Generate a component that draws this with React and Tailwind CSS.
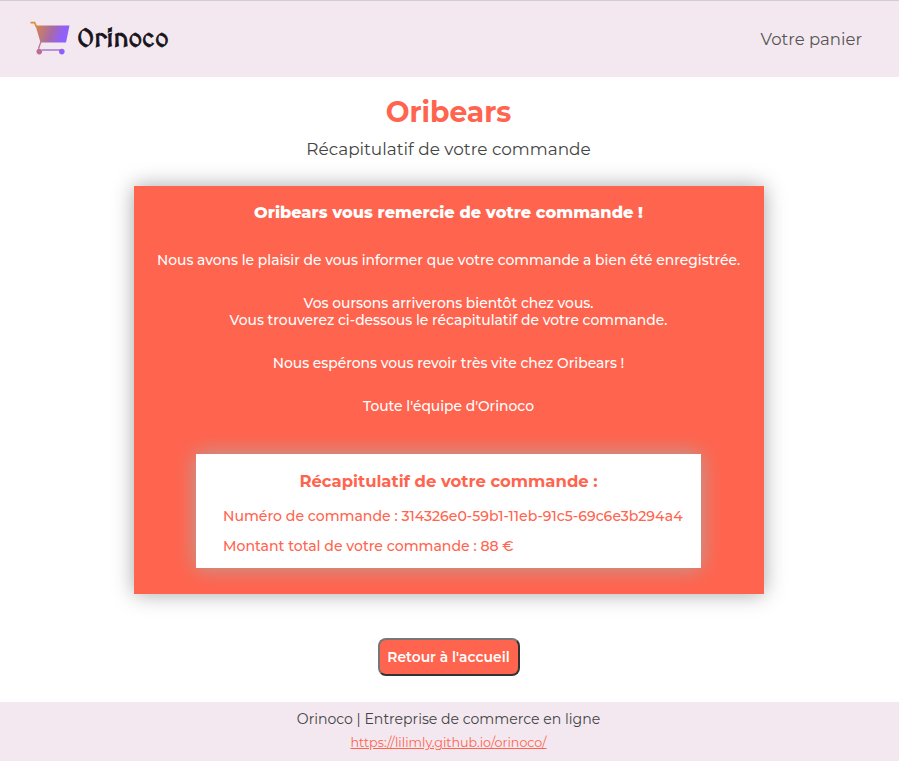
function Logo() {
  return (
    <div className="flex items-center">
      <svg width="42" height="36" viewBox="0 0 42 36" fill="none">
        <defs>
          <linearGradient id="cart" gradientUnits="userSpaceOnUse" x1="4" y1="8" x2="34" y2="19">
            <stop offset="0" stopColor="#d98747" />
            <stop offset="0.55" stopColor="#a66ba8" />
            <stop offset="0.9" stopColor="#9160fa" />
          </linearGradient>
        </defs>
        <path d="M0.5 1.6H4.6L6.5 6" stroke="#e08a35" strokeWidth="1.6" />
        <path d="M5.5 4.5H39.5L36 21.5H10.5Z" fill="url(#cart)" />
        <path d="M10.8 21L8.5 27.8" stroke="#bd7490" strokeWidth="1.3" />
        <path d="M12 29H30" stroke="#a878cf" strokeWidth="1.5" />
        <circle cx="9.3" cy="30.6" r="2.8" fill="#bd6d94" />
        <circle cx="31.8" cy="30.6" r="2.8" fill="#9160fa" />
      </svg>
      <span className="mt-[2px] ml-[5px] font-['MedievalSharp','Macondo','Fondamento','Lato',sans-serif] text-[26px] leading-[36px] font-bold text-[#17131a] [-webkit-text-stroke:0.8px_#17131a]">
        Orinoco
      </span>
    </div>
  );
}

export default function App() {
  return (
    <div className="flex h-[762px] w-[899px] flex-col overflow-hidden bg-white font-['Montserrat','Inter','Liberation_Sans',sans-serif] text-[#444]">
      <header className="flex h-[77px] items-center justify-between border-t border-[#d0ccd4] bg-[#f3e8f0] pr-[37px] pl-[30px]">
        <Logo />
        <a className="text-[16.5px] leading-[20px] text-[#555]">Votre panier</a>
      </header>

      <main className="flex h-[625px] flex-col items-center pr-[2px]">
        <h1 className="mt-[17px] text-[28.2px] leading-[36px] font-bold text-[#ff644e]">Oribears</h1>
        <h2 className="mt-[9px] text-[16.9px] leading-[20px]">Récapitulatif de votre commande</h2>

        <section className="mt-[27px] flex h-[408px] w-[630px] flex-col items-center bg-[#ff644e] text-center text-[13.88px] leading-[17px] font-medium whitespace-nowrap text-white shadow-[0_0_20px_rgba(0,0,0,0.35)]">
          <h3 className="mt-[16px] text-[16.2px] leading-[20px] font-extrabold">Oribears vous remercie de votre commande !</h3>
          <p className="mt-[30px]">Nous avons le plaisir de vous informer que votre commande a bien été enregistrée.</p>
          <p className="mt-[26px]">Vos oursons arriverons bientôt chez vous.</p>
          <p>Vous trouverez ci-dessous le récapitulatif de votre commande.</p>
          <p className="mt-[26px]">Nous espérons vous revoir très vite chez Oribears !</p>
          <p className="mt-[26px]">Toute l'équipe d'Orinoco</p>

          <div className="mt-[39px] flex h-[114px] w-[505px] flex-col items-start bg-white pl-[27px] text-[14.08px] text-[#ff644e] shadow-[0_0_20px_rgba(160,180,180,0.8)]">
            <h4 className="mt-[17px] -ml-[27px] w-[505px] text-[16.45px] leading-[20px] font-bold">Récapitulatif de votre commande :</h4>
            <p className="mt-[17px]">Numéro de commande : 314326e0-59b1-11eb-91c5-69c6e3b294a4</p>
            <p className="mt-[13px]">Montant total de votre commande : 88 €</p>
          </div>
        </section>

        <button className="mt-[44px] h-[38px] w-[142px] rounded-[8px] border-2 border-t-[#777] border-r-[#333] border-b-[#333] border-l-[#777] bg-[#ff644e] text-[13.9px] leading-[17px] font-semibold whitespace-nowrap text-white">
          Retour à l'accueil
        </button>
      </main>

      <footer className="flex h-[59px] flex-col items-center bg-[#f3e8f0] pr-[2px] whitespace-nowrap">
        <p className="mt-[9px] text-[14.08px] leading-[17px]">Orinoco | Entreprise de commerce en ligne</p>
        <a className="mt-[7px] text-[12.7px] leading-[16px] text-[#ff644e] underline">https://lilimly.github.io/orinoco/</a>
      </footer>
    </div>
  );
}
